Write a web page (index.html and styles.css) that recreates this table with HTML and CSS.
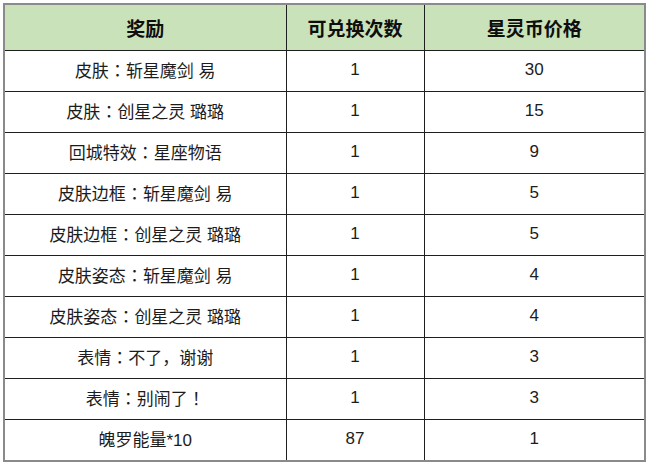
FILE: index.html
```html
<!DOCTYPE html>
<html lang="zh-CN">
<head>
<meta charset="utf-8">
<link rel="stylesheet" href="styles.css">
</head>
<body>
<table class="rewards">
  <colgroup>
    <col class="c1"><col class="c2"><col class="c3">
  </colgroup>
  <thead>
    <tr><th>奖励</th><th>可兑换次数</th><th>星灵币价格</th></tr>
  </thead>
  <tbody>
    <tr><td>皮肤<span class="pn" lang="ja">：</span>斩星魔剑 易</td><td>1</td><td>30</td></tr>
    <tr><td>皮肤<span class="pn" lang="ja">：</span>创星之灵 璐璐</td><td>1</td><td>15</td></tr>
    <tr><td>回城特效<span class="pn" lang="ja">：</span>星座物语</td><td>1</td><td>9</td></tr>
    <tr><td>皮肤边框<span class="pn" lang="ja">：</span>斩星魔剑 易</td><td>1</td><td>5</td></tr>
    <tr><td>皮肤边框<span class="pn" lang="ja">：</span>创星之灵 璐璐</td><td>1</td><td>5</td></tr>
    <tr><td>皮肤姿态<span class="pn" lang="ja">：</span>斩星魔剑 易</td><td>1</td><td>4</td></tr>
    <tr><td>皮肤姿态<span class="pn" lang="ja">：</span>创星之灵 璐璐</td><td>1</td><td>4</td></tr>
    <tr><td>表情<span class="pn" lang="ja">：</span>不了<span class="pn" lang="ja">，</span>谢谢</td><td>1</td><td>3</td></tr>
    <tr><td>表情<span class="pn" lang="ja">：</span>别闹了<span class="pn" lang="ja">！</span></td><td>1</td><td>3</td></tr>
    <tr><td>魄罗能量*10</td><td>87</td><td>1</td></tr>
  </tbody>
</table>
</body>
</html>
```
FILE: styles.css
```css
html, body {
  margin: 0;
  padding: 0;
  background: #ffffff;
}
body {
  padding: 3px 0 0 3px;
  font-family: "Liberation Sans", "Noto Sans CJK SC", sans-serif;
}
.rewards {
  border-collapse: collapse;
  width: 641px;
  table-layout: fixed;
  border: 2px solid #8a8a8a;
}
.c1 { width: 282px; }
.c2 { width: 138px; }
.c3 { width: 221px; }
.rewards th,
.rewards td {
  border: 1px solid #1e1e1e;
  text-align: center;
  padding: 0;
  color: #1c1c1c;
}
.rewards th {
  background: #c9e2b9;
  height: 44px;
  padding-bottom: 1px;
  font-size: 19px;
  font-weight: bold;
  color: #0e0e0e;
}
.rewards td {
  height: 37px;
  padding-bottom: 3px;
  font-size: 17px;
}
.pn {
  font-family: "Noto Sans CJK JP", sans-serif;
}
```
